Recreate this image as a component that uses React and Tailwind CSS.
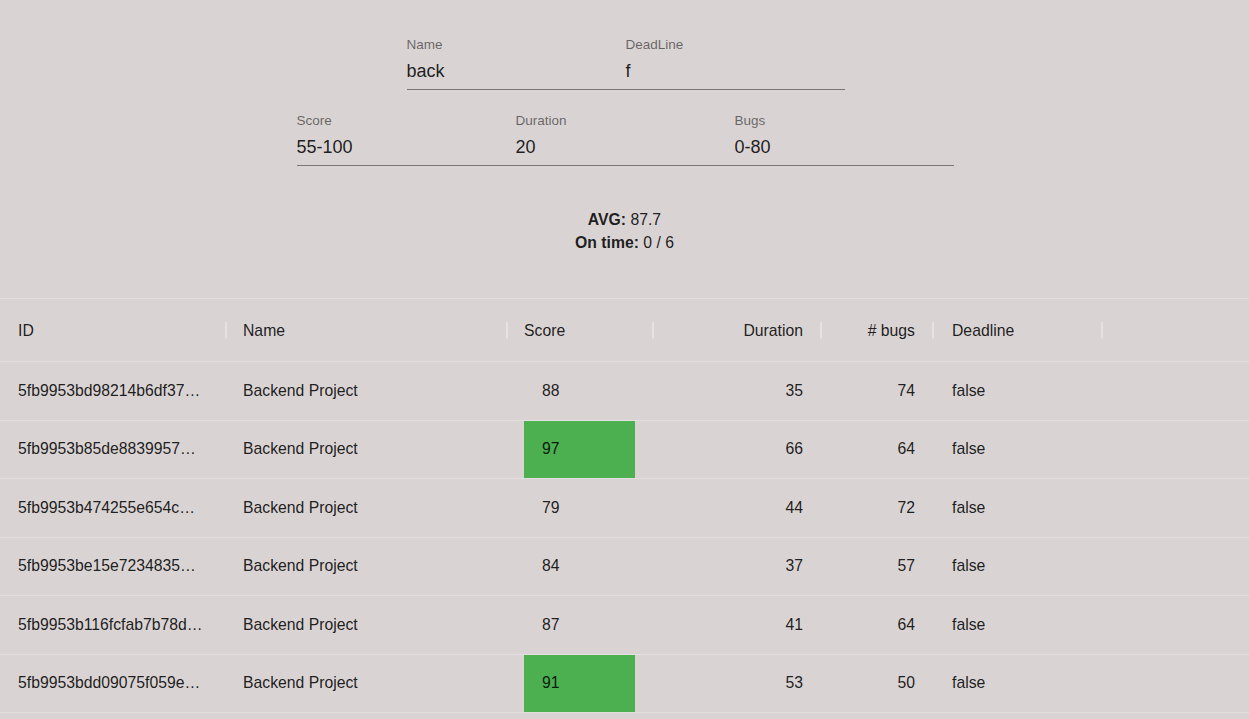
import React from 'react';

const rows = [
  { id: '5fb9953bd98214b6df37…', name: 'Backend Project', score: 88, duration: 35, bugs: 74, deadline: 'false' },
  { id: '5fb9953b85de8839957…', name: 'Backend Project', score: 97, duration: 66, bugs: 64, deadline: 'false' },
  { id: '5fb9953b474255e654c…', name: 'Backend Project', score: 79, duration: 44, bugs: 72, deadline: 'false' },
  { id: '5fb9953be15e7234835…', name: 'Backend Project', score: 84, duration: 37, bugs: 57, deadline: 'false' },
  { id: '5fb9953b116fcfab7b78d…', name: 'Backend Project', score: 87, duration: 41, bugs: 64, deadline: 'false' },
  { id: '5fb9953bdd09075f059e…', name: 'Backend Project', score: 91, duration: 53, bugs: 50, deadline: 'false' },
];

const Field = ({ label, value }) => (
  <div className="w-[219px] flex flex-col">
    <label className="text-[13.5px] leading-[18px] text-[rgba(0,0,0,0.54)]">{label}</label>
    <div className="h-[36px] pt-[7px] pb-[7px] border-b border-[#7a7676] text-[18px] leading-[21px] text-[rgba(0,0,0,0.87)]">
      {value}
    </div>
  </div>
);

const Sep = () => (
  <div className="absolute right-[-1px] top-1/2 -translate-y-1/2 w-[2px] h-[17px] bg-[#e6e2e2]" />
);

const cols = [
  { key: 'id', label: 'ID', w: 'w-[226px]', cls: 'px-[18px]' },
  { key: 'name', label: 'Name', w: 'w-[281px]', cls: 'pl-[17px] pr-[18px]' },
  { key: 'score', label: 'Score', w: 'w-[146px]', cls: 'pl-[17px] pr-[18px]' },
  { key: 'duration', label: 'Duration', w: 'w-[168px]', cls: 'px-[18px] justify-end' },
  { key: 'bugs', label: '# bugs', w: 'w-[112px]', cls: 'px-[18px] justify-end' },
  { key: 'deadline', label: 'Deadline', w: 'w-[169px]', cls: 'px-[19px]' },
];

const App = () => {
  return (
    <div
      className="min-h-screen bg-[#d9d3d3] text-[rgba(0,0,0,0.87)] overflow-hidden"
      style={{ fontFamily: '"Liberation Sans", Arial, sans-serif' }}
    >
      <div className="pt-[36px] flex flex-col items-center">
        <div className="flex pl-[2px]">
          <Field label="Name" value="back" />
          <Field label="DeadLine" value="f" />
        </div>
        <div className="flex mt-[22px] pl-[1px]">
          <Field label="Score" value="55-100" />
          <Field label="Duration" value="20" />
          <Field label="Bugs" value="0-80" />
        </div>
        <div className="mt-[43px] text-center text-[15.75px] leading-[22.5px]">
          <div><span className="font-bold">AVG:</span> 87.7</div>
          <div><span className="font-bold">On time:</span> 0 / 6</div>
        </div>
      </div>

      <div className="mt-[44px] w-[1260px] border-t border-[#e4e0e0] text-[15.75px]">
        <div className="flex h-[63px] border-b border-[#e4e0e0]">
          {cols.map((c) => (
            <div key={c.key} className={`${c.w} relative flex items-center pt-[1px] ${c.cls}`}>
              <span>{c.label}</span>
              <Sep />
            </div>
          ))}
        </div>
        {rows.map((r) => (
          <div key={r.id} className="flex h-[58.5px] border-b border-[#e4e0e0]">
            <div className="w-[226px] flex items-center px-[18px]">
              <span className="truncate">{r.id}</span>
            </div>
            <div className="w-[281px] flex items-center pl-[17px] pr-[18px]">
              <span className="truncate">{r.name}</span>
            </div>
            <div className="w-[146px] flex items-stretch pl-[17px]">
              <div className={`w-[111px] flex items-center pl-[18px] ${r.score > 90 ? 'bg-[#4caf50]' : ''}`}>
                {r.score}
              </div>
            </div>
            <div className="w-[168px] flex items-center justify-end px-[18px]">{r.duration}</div>
            <div className="w-[112px] flex items-center justify-end px-[18px]">{r.bugs}</div>
            <div className="w-[169px] flex items-center px-[19px]">{r.deadline}</div>
          </div>
        ))}
      </div>
    </div>
  );
};

export default App;
